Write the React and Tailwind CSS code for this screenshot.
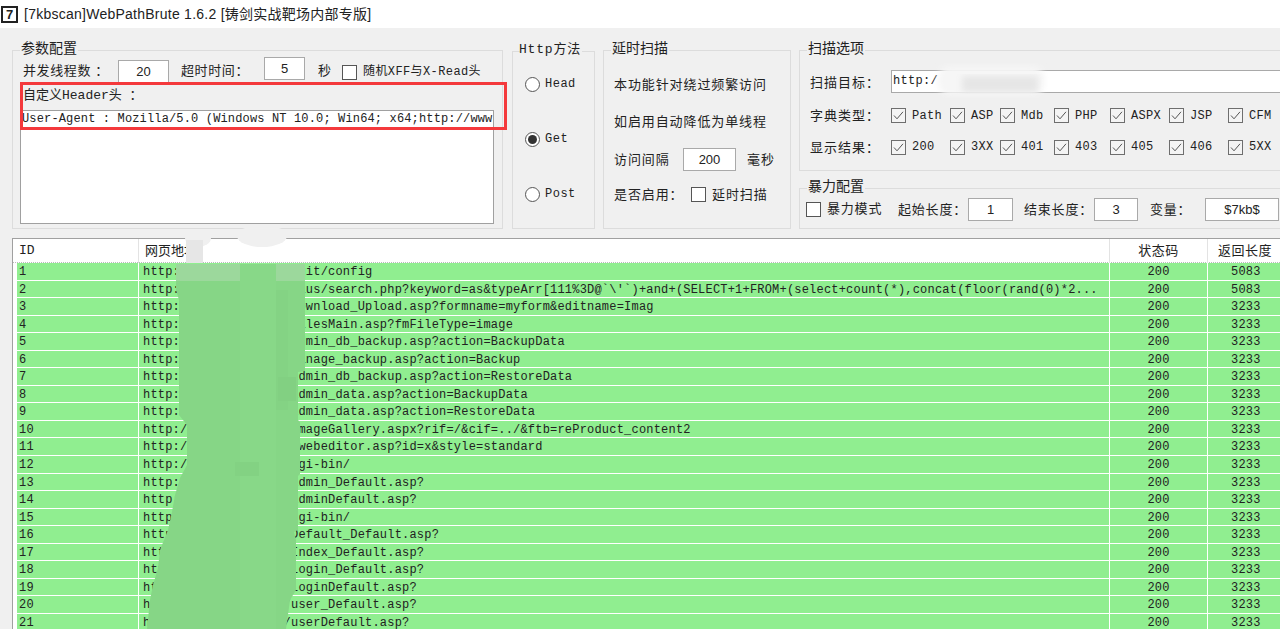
import React from 'react';

const HOST = 'http://192.168.1.10';
const MONO = "[font-family:'Liberation_Mono','Noto_Sans_CJK_SC',monospace]";

const rows = [
    ['/.git/config', 5083],
    ["/plus/search.php?keyword=as&typeArr[111%3D@`\\'`)+and+(SELECT+1+FROM+(select+count(*),concat(floor(rand(0)*2...", 5083],
    ['/Download_Upload.asp?formname=myform&editname=Imag', 3233],
    ['/FilesMain.asp?fmFileType=image', 3233],
    ['/admin_db_backup.asp?action=BackupData', 3233],
    ['/manage_backup.asp?action=Backup', 3233],
    ['/admin_db_backup.asp?action=RestoreData', 3233],
    ['/admin_data.asp?action=BackupData', 3233],
    ['/admin_data.asp?action=RestoreData', 3233],
    ['/ImageGallery.aspx?rif=/&cif=../&ftb=reProduct_content2', 3233],
    ['/ewebeditor.asp?id=x&style=standard', 3233],
    ['/cgi-bin/', 3233],
    ['/admin_Default.asp?', 3233],
    ['/adminDefault.asp?', 3233],
    ['/cgi-bin/', 3233],
    ['/Default_Default.asp?', 3233],
    ['/Index_Default.asp?', 3233],
    ['/Login_Default.asp?', 3233],
    ['/LoginDefault.asp?', 3233],
    ['/user_Default.asp?', 3233],
    ['/userDefault.asp?', 3233],
];

const dictTypes = ['Path', 'ASP', 'Mdb', 'PHP', 'ASPX', 'JSP', 'CFM'];
const statusTypes = ['200', '3XX', '401', '403', '405', '406', '5XX'];

const Group = ({ title, className, inner = '', children }) => (
    <fieldset className={`border border-[#dcdcdc] shrink-0 ${className}`}>
        <legend className="ml-[7px] px-px pb-1 text-[14px] leading-4 text-[#222]">{title}</legend>
        <div className={`-mt-0.5 ${inner}`}>{children}</div>
    </fieldset>
);

const Box = ({ width, height = 23, value, className = '' }) => (
    <div
        className={`flex items-center justify-center bg-white border border-[#a9a9a9] text-[13px] text-[#222] shrink-0 ${className}`}
        style={{ width, height }}
    >
        {value}
    </div>
);

const Check = ({ checked }) => (
    <span className={`flex items-center justify-center w-[15px] h-[15px] border shrink-0 ${checked ? 'border-[#6e6e6e] bg-[#f4f4f4]' : 'border-[#555] bg-white'}`}>
        {checked && (
            <svg width="11" height="11" viewBox="0 0 11 11" fill="none">
                <path d="M1 5.5 L4 8.8 L10 1.8" stroke="#555" strokeWidth="1" />
            </svg>
        )}
    </span>
);

const Radio = ({ checked, label }) => (
    <div className="flex items-center gap-[5px]">
        <span className="flex items-center justify-center w-[15px] h-[15px] rounded-full border border-[#555] bg-white">
            {checked && <span className="w-[9px] h-[9px] rounded-full bg-[#333]" />}
        </span>
        <span className={`text-[12px] tracking-[0.5px] text-[#222] ${MONO}`}>{label}</span>
    </div>
);

const CheckRow = ({ label, items, className = '' }) => (
    <div className={`flex items-center ${className}`}>
        <span className="w-[81px] text-[13px] tracking-[1px] text-[#222]">{label}</span>
        <div className="grid grid-cols-[59px_50px_54px_56px_59px_59px_52px] flex-1">
            {items.map((item) => (
                <div key={item} className="flex items-center gap-[6px]">
                    <Check checked />
                    <span className={`text-[12px] tracking-[0.3px] text-[#222] ${MONO}`}>{item}</span>
                </div>
            ))}
        </div>
    </div>
);

const Redaction = () => (
    <svg className="absolute left-0 top-0 pointer-events-none" width="1280" height="629" viewBox="0 0 1280 629">
        <defs>
            <filter id="soft"><feGaussianBlur stdDeviation="3" /></filter>
        </defs>
        {/* smudges over the target field */}
        <rect x="938" y="66" width="106" height="29" rx="12" fill="#f6f6f6" filter="url(#soft)" />
        <rect x="962" y="76" width="76" height="16" fill="#e6e6e6" filter="url(#soft)" />
        {/* smudges over the table header */}
        <ellipse cx="198" cy="238" rx="13" ry="9" fill="#f0f0f0" />
        <ellipse cx="262" cy="236" rx="25" ry="11" fill="#f0f0f0" />
        <rect x="186" y="240" width="17" height="23" fill="#e6e6e6" />
        {/* green mosaic over the hosts */}
        <polygon
            points="176,264 305,264 305,371 298,372 298,420 300,422 300,474 298,476 298,530 294,532 296,540 296,590 290,600 286,629 147,629 150,600 153,585 158,568 160,550 168,530 172,512 175,495 180,478 187,465 187,425 179,415 179,300 176,290"
            fill="#86d686"
        />
        <rect x="176" y="264" width="129" height="17" fill="#9cd89c" />
        <rect x="276" y="290" width="12" height="120" fill="#84d384" />
        <rect x="240" y="264" width="36" height="365" fill="#88d888" />
        <rect x="278" y="377" width="18" height="24" fill="#82d082" />
        <rect x="235" y="462" width="24" height="14" fill="#83d283" />
    </svg>
);

export default function App() {
    return (
        <div className="relative w-[1280px] h-[629px] overflow-hidden bg-[#f0f0f0] text-[#222] [font-family:'Liberation_Sans','Noto_Sans_CJK_SC',sans-serif]">
            {/* title bar */}
            <div className="flex items-center h-7 bg-white pl-px">
                <span className="flex items-center justify-center w-[17px] h-[17px] border-2 border-[#222] text-[13px] leading-none font-bold bg-white">7</span>
                <span className="ml-[6px] text-[14px] tracking-[0.25px] text-[#222]">[7kbscan]WebPathBrute 1.6.2 [铸剑实战靶场内部专版]</span>
            </div>

            {/* settings panels */}
            <div className="flex pl-3 pt-3">
                <Group title="参数配置" className="w-[491px] h-[189px] mr-[9px]" inner="pl-[7px]">
                    <div className="flex items-start pl-[3px] h-[28px] text-[13px]">
                        <span className="w-[95px] mt-[3px] tracking-[0.6px]">并发线程数 ：</span>
                        <Box width={51} value="20" className="mt-[2px]" />
                        <span className="ml-3 w-[83px] mt-[3px] tracking-[0.6px]">超时时间：</span>
                        <Box width={41} value="5" className="-mt-px" />
                        <span className="ml-[13px] w-[24px] mt-[3px]">秒</span>
                        <div className="flex items-center gap-[6px] mt-[5px]">
                            <Check />
                            <span className={`text-[12px] tracking-[0.4px] ${MONO}`}>随机XFF与X-Read头</span>
                        </div>
                    </div>
                    <div className={`pl-[3px] h-[24px] text-[13px] leading-[20px] ${MONO}`}>自定义Header头 ：</div>
                    <div className={`w-[474px] h-[114px] bg-white border border-[#a0a0a0] overflow-hidden pl-px text-[12px] tracking-[0.15px] leading-[16px] whitespace-nowrap ${MONO}`}>
                        User-Agent : Mozilla/5.0 (Windows NT 10.0; Win64; x64;http://www
                    </div>
                </Group>

                <Group title={<span className={`-ml-0.5 text-[13px] tracking-[0.8px] ${MONO}`}>Http方法</span>} className="w-[83px] h-[189px] mr-2" inner="pl-[12px]">
                    <div className="flex flex-col gap-[37px] pt-[15px]">
                        <Radio label="Head" />
                        <Radio checked label="Get" />
                        <Radio label="Post" />
                    </div>
                </Group>

                <Group title="延时扫描" className="w-[188px] h-[189px] mr-2" inner="pl-[10px] text-[13px] tracking-[0.9px]">
                    <div className="leading-[20px] pt-[17px]">本功能针对绕过频繁访问</div>
                    <div className="leading-[20px] mt-[17px]">如启用自动降低为单线程</div>
                    <div className="flex items-center h-[23px] mt-4">
                        <span className="w-[69px]">访问间隔</span>
                        <Box width={53} value="200" className="tracking-normal" />
                        <span className="ml-[11px]">毫秒</span>
                    </div>
                    <div className="flex items-center mt-[14px]">
                        <span className="w-[77px]">是否启用：</span>
                        <Check />
                        <span className="ml-[6px]">延时扫描</span>
                    </div>
                </Group>

                <div className="flex flex-col w-[490px] shrink-0">
                    <Group title="扫描选项" className="h-[131px]" inner="pl-[10px]">
                        <div className="flex items-center pt-[12px]">
                            <span className="w-[81px] pt-[3px] text-[13px] tracking-[1px]">扫描目标：</span>
                            <div className={`flex-1 h-[23px] bg-white border border-[#a9a9a9] pl-px text-[12px] tracking-[0.3px] leading-[20px] ${MONO}`}>http:/</div>
                        </div>
                        <CheckRow label="字典类型：" items={dictTypes} className="mt-[13px]" />
                        <CheckRow label="显示结果：" items={statusTypes} className="mt-3" />
                    </Group>
                    <Group title="暴力配置" className="h-[51px] mt-[7px]" inner="pl-[6px] text-[13px] tracking-[0.8px]">
                        <div className="flex items-center h-[23px] mt-[2px]">
                            <Check />
                            <span className="ml-[6px] w-[71px] -mt-px">暴力模式</span>
                            <span className="w-[70px]">起始长度：</span>
                            <Box width={45} value="1" className="tracking-normal" />
                            <span className="ml-[11px] w-[70px]">结束长度：</span>
                            <Box width={44} value="3" className="tracking-normal" />
                            <span className="ml-3 w-[55px]">变量：</span>
                            <Box width={74} value="$7kb$" className="tracking-normal" />
                        </div>
                    </Group>
                </div>
            </div>

            {/* result list */}
            <div className="ml-3 mt-[9px] border border-[#a0a0a0] border-r-0 bg-white h-[400px] overflow-hidden">
                <div className="grid grid-cols-[126px_971px_98px_1fr] h-6 border-b border-dotted border-[#bbb] text-[13px]">
                    <div className={`pl-[6px] leading-6 border-r border-[#e3e3e3] ${MONO}`}>ID</div>
                    <div className="pl-[6px] leading-6 border-r border-[#e3e3e3]">网页地址</div>
                    <div className="text-center leading-6 border-r border-[#e3e3e3] tracking-[0.5px]">状态码</div>
                    <div className="pl-[10px] leading-6 tracking-[0.5px]">返回长度</div>
                </div>
                <div className={`pl-1 text-[12px] tracking-[0.2px] ${MONO}`}>
                    {rows.map(([path, length], i) => (
                        <div key={i} className="grid grid-cols-[122px_971px_98px_1fr] h-[17.55px] leading-[18px] bg-[#90ee90] border-b border-white whitespace-nowrap overflow-hidden">
                            <div className="pl-[2px] border-r border-white">{i + 1}</div>
                            <div className="pl-[4px] border-r border-white overflow-hidden">{HOST + path}</div>
                            <div className="text-center border-r border-white">200</div>
                            <div className="pl-[23px]">{length}</div>
                        </div>
                    ))}
                </div>
            </div>

            {/* red highlight */}
            <div className="absolute left-5 top-[82px] w-[487px] h-[48px] border-[3px] border-[#f4393c] pointer-events-none" />

            <Redaction />
        </div>
    );
}
